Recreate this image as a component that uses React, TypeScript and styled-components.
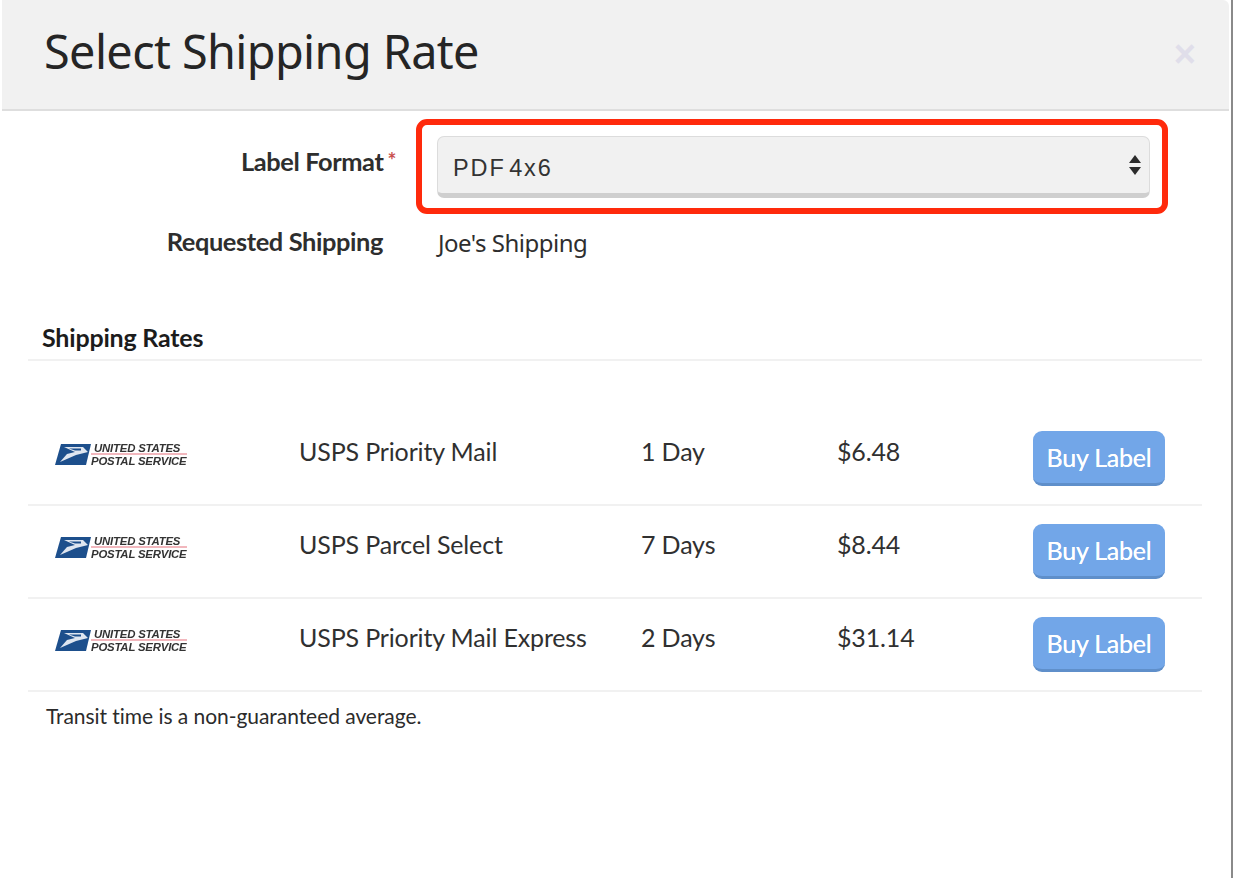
import React from "react";
import styled, { createGlobalStyle } from "styled-components";

const Global = createGlobalStyle`
  html, body { margin: 0; padding: 0; background: #fff; }
  body { font-family: Lato, "Liberation Sans", sans-serif; color: #2b2b2b; }
`;
const Page = styled.div`
  width: 1234px; height: 878px; overflow: hidden; background: #fff; display: flex; padding-right: 1px; box-sizing: border-box;
`;
const Modal = styled.div`
  flex: 1; background: #fff; padding: 0 2px; display: flex; flex-direction: column;
`;
const EdgeStrip = styled.div`
  width: 2px; background: #8a8a8a; flex: none;
`;
const Header = styled.header`
  height: 109px; background: #f1f1f1; border-bottom: 2px solid #dedede; display: flex; align-items: center;
  justify-content: space-between; padding: 0 33px 0 42px; border-top-right-radius: 6px; flex: none;
`;
const Title = styled.h1`
  margin: 0; font: 400 46.8px/1 "Noto Sans", sans-serif; color: #252525; position: relative; top: -3px; letter-spacing: -0.6px;
`;
const Close = styled.span`
  font: 700 38px/1 "Liberation Sans", sans-serif; color: #e0deea; position: relative; top: -1px;
`;
const Body = styled.div`
  padding: 8px 27px 0 26px; display: flex; flex-direction: column;
`;
const FormRow = styled.div`
  display: flex; align-items: flex-start; margin-bottom: ${(p: { $mb?: number }) => p.$mb ?? 0}px;
`;
const LabelCol = styled.div`
  width: 355px; text-align: right; font: 700 25.4px/28px Lato, sans-serif; color: #2e2e2e; padding-top: ${(p: { $pt: number }) => p.$pt}px;
  letter-spacing: -0.4px; flex: none;
`;
const Star = styled.sup`
  color: #c9504e; font-size: 21px; line-height: 0; margin-left: 4px; margin-right: -13px; vertical-align: 3px;
`;
const Highlight = styled.div`
  margin-left: 33px; width: 752px; height: 95px; box-sizing: border-box; border: 6px solid #ff2a0c; border-radius: 11px;
  padding: 11px 12px 0 15px;
`;
const SelectBox = styled.div`
  height: 62px; box-sizing: border-box; background: #f1f1f1; border: 1px solid #dcdcdc; border-bottom: 5px solid #cfcfcf; border-radius: 7px;
  display: flex; align-items: center; justify-content: space-between; padding: 7px 7px 0 15px;
  font: 400 23.5px/1 "Liberation Sans", sans-serif; color: #333; letter-spacing: 1.9px; word-spacing: -5px;
`;
const Arrows = styled.svg`
  width: 14px; height: 24px; margin-top: -7px;
`;
const Value = styled.div`
  margin-left: 55px; font: 400 24px/28px "Noto Sans", sans-serif; letter-spacing: -0.5px; color: #2e2e2e; padding-top: 7px;
`;
const SectionTitle = styled.h2`
  margin: 66px 0 0 14px; font: 700 25px/28px Lato, sans-serif; color: #1c1c1c; letter-spacing: -0.2px; height: 36px;
`;
const Rule = styled.div`
  height: 2px; background: #f1f1f1;
`;
const Rows = styled.div`
  margin-top: 52px;
`;
const Row = styled.div`
  height: 91px; display: grid; grid-template-columns: 271px 342px 196px 1fr 133px; padding-right: 36px; box-sizing: content-box;
  border-bottom: 2px solid #f1f1f1;
`;
const LogoCell = styled.div`
  padding: 30px 0 0 27px; display: flex; align-items: flex-start; filter: blur(0.7px);
`;
const LogoText = styled.div`
  margin-left: -1px; font: italic 700 11.4px/12px "Liberation Sans", sans-serif; color: #333; white-space: nowrap; letter-spacing: -0.2px;
  display: flex; flex-direction: column;
`;
const LogoLine = styled.span`
  display: block;
  &:first-child { border-bottom: 2px solid #f2b7bd; line-height: 10px; padding-left: 3px; }
`;
const Cell = styled.div`
  font: 400 25px/28px Lato, sans-serif; padding-top: 24px; color: #303030; letter-spacing: -0.15px; white-space: nowrap;
`;
const BuyButton = styled.button`
  width: 132px; height: 55px; margin-top: 18px; box-sizing: border-box; background: #72a6e8; color: #fff; border: 0; border-bottom: 3px solid #5f8fca;
  border-radius: 9px; font: 400 25px/1 Lato, sans-serif; letter-spacing: -0.2px; padding: 0;
  text-shadow: 0 0 0.6px #fff;
`;
const Note = styled.p`
  margin: 10px 0 0 18px; font: 400 21px/28px Lato, sans-serif; color: #2b2b2b; letter-spacing: -0.05px;
`;

const rates = [
  { name: "USPS Priority Mail", time: "1 Day", price: "$6.48" },
  { name: "USPS Parcel Select", time: "7 Days", price: "$8.44" },
  { name: "USPS Priority Mail Express", time: "2 Days", price: "$31.14" },
];

const Eagle = () => (
  <svg width="37" height="23" viewBox="0 0 37 23">
    <polygon points="6,1 36,1 31,22 0,22" fill="#1d4f8c" />
    <path d="M9 4 L28 4 L33 9 L21 12 L5 19 L12 11 L20 9 Z" fill="#dfe6f0" />
    <path d="M14 5.5 L26 5.5 L26 7.5 L20 7.5 Z" fill="#1d4f8c" />
  </svg>
);

export default function App() {
  return (
    <Page>
      <Global />
      <Modal>
        <Header>
          <Title>Select Shipping Rate</Title>
          <Close>×</Close>
        </Header>
        <Body>
          <FormRow $mb={8}>
            <LabelCol $pt={28}>
              Label Format<Star>*</Star>
            </LabelCol>
            <Highlight>
              <SelectBox>
                PDF 4x6
                <Arrows viewBox="0 0 14 24">
                  <polygon points="7,2 13,10 1,10" fill="#2b2b2b" />
                  <polygon points="1,14 13,14 7,22" fill="#2b2b2b" />
                </Arrows>
              </SelectBox>
            </Highlight>
          </FormRow>
          <FormRow>
            <LabelCol $pt={5}>Requested Shipping</LabelCol>
            <Value>Joe's Shipping</Value>
          </FormRow>
          <SectionTitle>Shipping Rates</SectionTitle>
          <Rule />
          <Rows>
            {rates.map((r) => (
              <Row key={r.name}>
                <LogoCell>
                  <Eagle />
                  <LogoText>
                    <LogoLine>UNITED STATES</LogoLine>
                    <LogoLine>POSTAL SERVICE</LogoLine>
                  </LogoText>
                </LogoCell>
                <Cell>{r.name}</Cell>
                <Cell>{r.time}</Cell>
                <Cell>{r.price}</Cell>
                <BuyButton>Buy Label</BuyButton>
              </Row>
            ))}
          </Rows>
          <Note>Transit time is a non-guaranteed average.</Note>
        </Body>
      </Modal>
      <EdgeStrip />
    </Page>
  );
}
